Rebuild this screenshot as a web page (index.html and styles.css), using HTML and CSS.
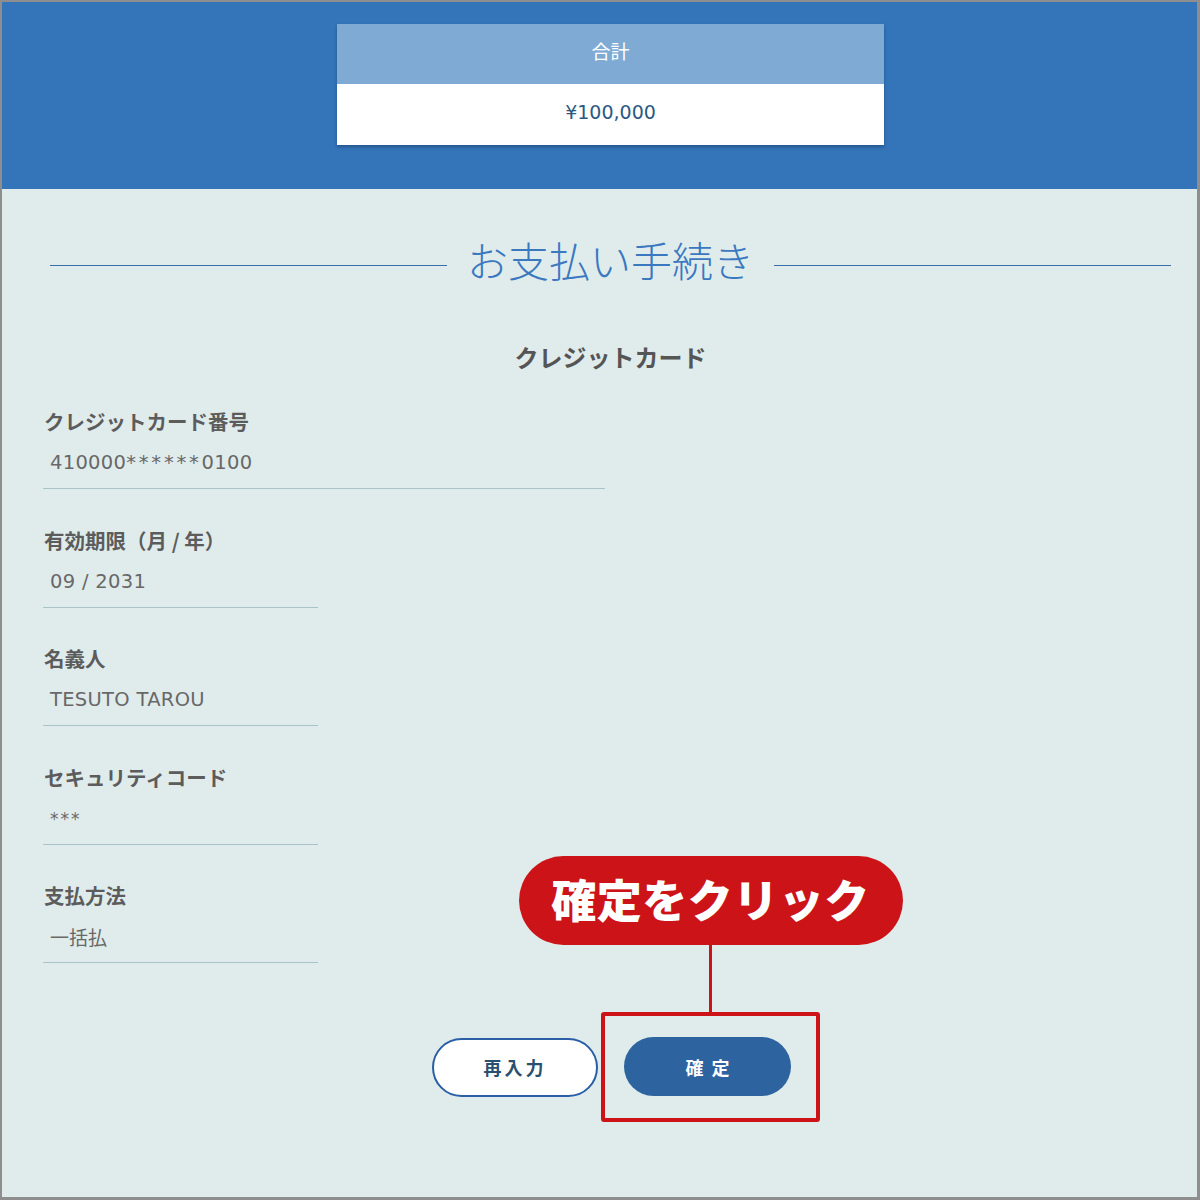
FILE: index.html
```html
<!DOCTYPE html>
<html lang="ja">
<head>
<meta charset="utf-8">
<title>お支払い手続き</title>
<link rel="stylesheet" href="styles.css">
</head>
<body>
<div class="frame">
  <header class="header">
    <div class="total-card">
      <div class="total-head">合計</div>
      <div class="total-value">¥100,000</div>
    </div>
  </header>
  <main class="main">
    <div class="title-row">
      <span class="title-line"></span>
      <h1 class="title">お支払い手続き</h1>
      <span class="title-line"></span>
    </div>
    <h2 class="section">クレジットカード</h2>
    <div class="form">
      <div class="field field-wide">
        <div class="label">クレジットカード番号</div>
        <div class="value value-latin">410000<span class="stars">******</span>0100</div>
      </div>
      <div class="field">
        <div class="label">有効期限（月 / 年）</div>
        <div class="value value-latin">09 / 2031</div>
      </div>
      <div class="field">
        <div class="label">名義人</div>
        <div class="value value-latin">TESUTO TAROU</div>
      </div>
      <div class="field">
        <div class="label">セキュリティコード</div>
        <div class="value value-small">***</div>
      </div>
      <div class="field">
        <div class="label">支払方法</div>
        <div class="value">一括払</div>
      </div>
    </div>
    <div class="actions">
      <button class="btn btn-outline">再入力</button>
      <div class="highlight">
        <span class="callout-line"></span>
        <div class="callout">確定をクリック</div>
        <button class="btn btn-primary">確定</button>
      </div>
    </div>
  </main>
</div>
</body>
</html>
```

FILE: styles.css
```css
* { box-sizing: border-box; }
html, body { margin: 0; padding: 0; }
body {
  font-family: "Noto Sans CJK JP", "Noto Sans", sans-serif;
  background: #8c8c8c;
}
.frame {
  width: 1200px;
  height: 1200px;
  border: 2px solid #8e8e8e;
  border-right-width: 3px;
  border-bottom-width: 3px;
  background: #e0ecec;
  overflow: hidden;
}
.header {
  height: 187px;
  background: #3474b8;
  padding-top: 22px;
  padding-left: 335px;
}
.total-card {
  width: 547px;
  box-shadow: 0 2px 3px rgba(20, 50, 90, 0.45);
}
.total-head {
  height: 60px;
  background: #7eaad4;
  color: #ffffff;
  font-size: 19px;
  line-height: 54px;
  text-align: center;
}
.total-value {
  height: 61px;
  background: #ffffff;
  color: #2a5a80;
  font-family: "DejaVu Sans", sans-serif;
  font-size: 19px;
  line-height: 56px;
  text-align: center;
}
.main {
  margin-left: 22px;
  position: relative;
}
.title-row {
  display: flex;
  align-items: center;
  padding: 0 26px 0 26px;
  margin-top: 46px;
}
.title-line {
  flex: 1;
  height: 1px;
  background: #3a6fae;
  margin-top: 12px;
}
.title {
  margin: 0 20px;
  font-size: 41px;
  line-height: 48px;
  font-weight: 300;
  color: #3a78c0;
}
.section {
  margin: 59px 0 0 0;
  text-align: center;
  font-size: 24px;
  line-height: 30px;
  font-weight: 700;
  color: #555555;
}
.form {
  padding-left: 19px;
  margin-top: 34px;
}
.field {
  width: 275px;
  border-bottom: 1px solid #a9c3cb;
  padding-bottom: 10px;
  margin-bottom: 35.5px;
}
.field-wide { width: 562px; }
.label {
  font-size: 20.5px;
  line-height: 30px;
  font-weight: 700;
  color: #5c5c5c;
  padding-left: 1px;
}
.value {
  margin-top: 12px;
  padding-left: 7px;
  font-size: 19px;
  line-height: 30px;
  color: #686868;
}
.value-latin {
  font-family: "DejaVu Sans", sans-serif;
  font-size: 19.5px;
  letter-spacing: 0.3px;
}
.stars { letter-spacing: 2.8px; }
.value-small {
  font-family: "DejaVu Sans", sans-serif;
  font-size: 17px;
  letter-spacing: 2px;
}
.actions {
  display: flex;
  justify-content: center;
  align-items: center;
  padding-left: 31px;
  margin-top: 49px;
}
.btn {
  font-family: "Noto Sans CJK JP", sans-serif;
  font-weight: 700;
  font-size: 18px;
  height: 59px;
  border-radius: 30px;
  cursor: pointer;
}
.btn-outline {
  width: 166px;
  background: #ffffff;
  border: 2px solid #2a5ea6;
  color: #2a5070;
  letter-spacing: 3px;
  padding-left: 6px;
}
.highlight {
  position: relative;
  margin-left: 3px;
  border: 4px solid #cc1418;
  border-radius: 3px;
  padding: 21px 25px 22px 19px;
}
.btn-primary {
  display: block;
  width: 167px;
  background: #2d64a0;
  border: none;
  color: #ffffff;
  letter-spacing: 8px;
  padding-left: 14px;
}
.callout-line {
  position: absolute;
  left: calc(50% - 2px);
  bottom: calc(100% + 4px);
  width: 3px;
  height: 67px;
  background: #cc1418;
}
.callout {
  position: absolute;
  left: calc(50% - 192px);
  bottom: calc(100% + 71px);
  width: 384px;
  height: 89px;
  border-radius: 45px;
  background: #cc1418;
  color: #ffffff;
  font-size: 45px;
  font-weight: 900;
  line-height: 86px;
  text-align: center;
  letter-spacing: 0.5px;
  white-space: nowrap;
}
```
